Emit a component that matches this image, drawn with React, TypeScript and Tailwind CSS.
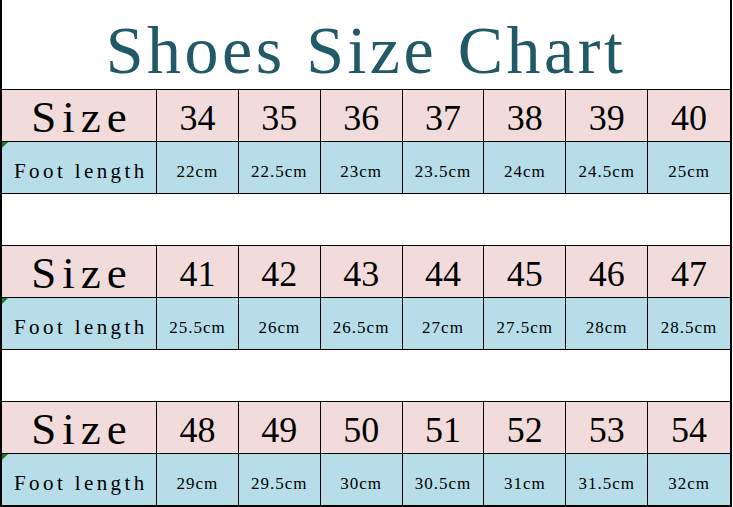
import React from 'react';

type Block = { sizes: string[]; lengths: string[] };

const blocks: Block[] = [
  {
    sizes: ['34', '35', '36', '37', '38', '39', '40'],
    lengths: ['22cm', '22.5cm', '23cm', '23.5cm', '24cm', '24.5cm', '25cm'],
  },
  {
    sizes: ['41', '42', '43', '44', '45', '46', '47'],
    lengths: ['25.5cm', '26cm', '26.5cm', '27cm', '27.5cm', '28cm', '28.5cm'],
  },
  {
    sizes: ['48', '49', '50', '51', '52', '53', '54'],
    lengths: ['29cm', '29.5cm', '30cm', '30.5cm', '31cm', '31.5cm', '32cm'],
  },
];

const serif = "font-['Liberation_Serif',serif]";

const SizeBlock: React.FC<{ block: Block }> = ({ block }) => (
  <div className="grid grid-cols-[155px_repeat(7,1fr)] shrink-0">
    {/* Size row */}
    <div className="h-[52px] bg-[#f2dcdb] border-r border-b border-black flex items-end justify-center pb-[1px]">
      <span className={`${serif} text-[45px] leading-none tracking-[6px] pl-[6px] text-black`}>Size</span>
    </div>
    {block.sizes.map((s, i) => (
      <div
        key={s}
        className={`h-[52px] bg-[#f2dcdb] border-b border-black flex items-end justify-center pb-[5px] ${i < 6 ? 'border-r' : ''}`}
      >
        <span className={`${serif} text-[36px] leading-none text-black`}>{s}</span>
      </div>
    ))}

    {/* Foot length row */}
    <div className="relative h-[52px] bg-[#b7dee8] border-r border-b border-black flex items-end justify-start pl-[12px] pb-[11px]">
      <span className="absolute left-0 top-0 w-0 h-0 border-t-[6px] border-t-[#1d7a1d] border-r-[6px] border-r-transparent" />
      <span className={`${serif} text-[21px] leading-none tracking-[3.4px] text-black`}>Foot length</span>
    </div>
    {block.lengths.map((l, i) => (
      <div
        key={l}
        className={`h-[52px] bg-[#b7dee8] border-b border-black flex items-end justify-center pb-[13px] ${i < 6 ? 'border-r' : ''}`}
      >
        <span className={`${serif} text-[17px] leading-none tracking-[1px] text-black`}>{l}</span>
      </div>
    ))}
  </div>
);

export default function App() {
  return (
    <div className="w-[733px] h-[507px] overflow-hidden bg-white">
      <div className="w-[732px] border-l-2 border-r-2 border-b-2 border-black flex flex-col">
        {/* Title */}
        <div className="h-[90px] shrink-0 border-b border-black flex items-end justify-center pb-[5px]">
          <h1 className={`${serif} text-[68px] leading-none tracking-[3.5px] text-[#215967] font-normal`}>
            Shoes Size Chart
          </h1>
        </div>

        {blocks.map((b, idx) => (
          <React.Fragment key={idx}>
            <SizeBlock block={b} />
            {idx < blocks.length - 1 && <div className="h-[52px] shrink-0 border-b border-black" />}
          </React.Fragment>
        ))}
      </div>
    </div>
  );
}
